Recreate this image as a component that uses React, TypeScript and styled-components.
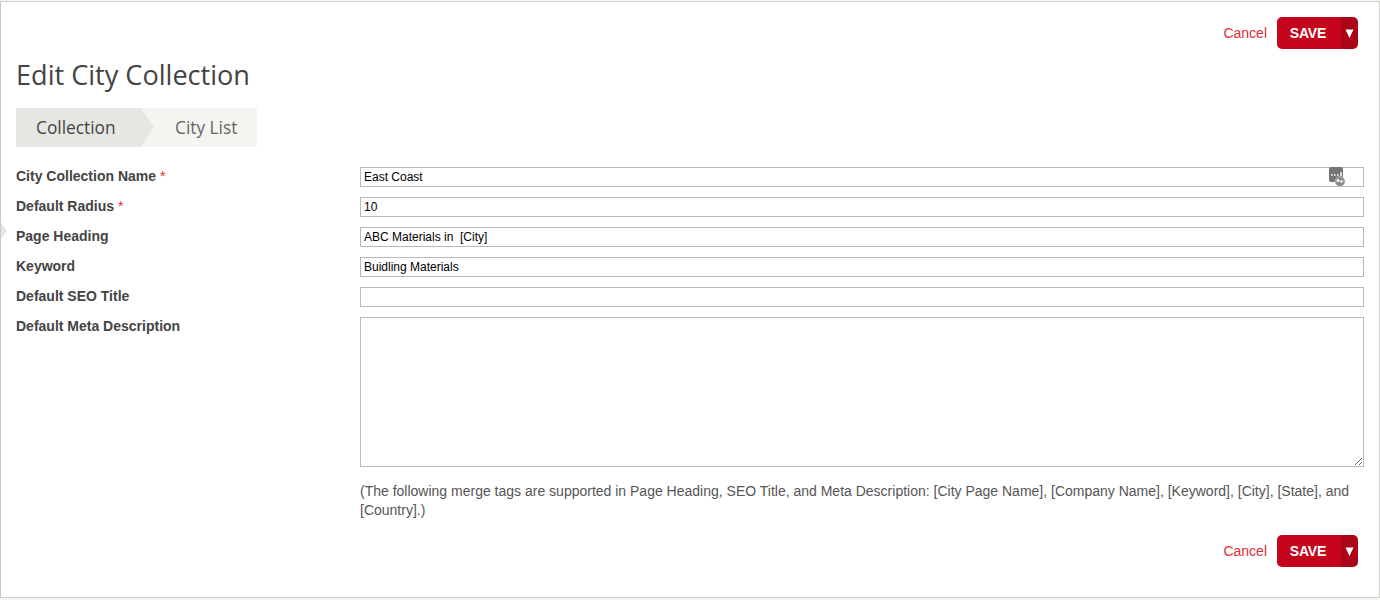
import React from 'react'
import styled, { createGlobalStyle } from 'styled-components'

const GlobalStyle = createGlobalStyle`
  html, body {
    margin: 0;
    padding: 0;
    background: #f6f6f1;
  }
  body {
    font-family: 'Liberation Sans', Arial, sans-serif;
  }
`

const Panel = styled.div`
  position: relative;
  box-sizing: border-box;
  width: 1380px;
  height: 597px;
  margin-top: 1px;
  padding: 15px 16px 0 15px;
  border: 1px solid #cfcfcb;
  border-left-color: #c8c8c8;
  background: #fff;
`

const SideNotch = styled.div`
  position: absolute;
  left: 0;
  top: 221px;
  width: 0;
  height: 0;
  border-top: 8px solid transparent;
  border-bottom: 8px solid transparent;
  border-left: 6px solid #e6e7e3;
`

const ActionBar = styled.div`
  display: flex;
  justify-content: flex-end;
  align-items: center;
  gap: 10px;
  padding-right: 5px;
`

const CancelLink = styled.a`
  font-size: 14px;
  color: #dc2c38;
  text-decoration: none;
`

const SaveGroup = styled.div`
  display: flex;
  height: 32px;
  border-radius: 5px;
  overflow: hidden;
`

const SaveButton = styled.button`
  width: 64px;
  border: 0;
  padding: 0 2px 0 0;
  background: #c4051c;
  color: #fff;
  font-family: 'Liberation Sans', Arial, sans-serif;
  font-size: 14px;
  font-weight: 700;
  letter-spacing: -0.2px;
`

const SaveToggle = styled.button`
  display: flex;
  align-items: center;
  justify-content: center;
  width: 17px;
  border: 0;
  padding: 0;
  background: #aa0416;
`

const Title = styled.h1`
  margin: 7px 0 0;
  font-family: 'Open Sans', sans-serif;
  font-size: 27.1px;
  line-height: 38px;
  font-weight: 400;
  color: #444;
`

const Tabs = styled.div`
  display: flex;
  width: 241px;
  height: 39px;
  margin-top: 14px;
  background: #f4f5f0;
`

const Tab = styled.div<{ $active?: boolean }>`
  position: relative;
  display: flex;
  align-items: center;
  box-sizing: border-box;
  height: 39px;
  font-family: 'Open Sans', sans-serif;
  font-size: 17.3px;
  color: ${({ $active }) => ($active ? '#444' : '#666')};
  width: ${({ $active }) => ($active ? '125px' : '116px')};
  padding-left: ${({ $active }) => ($active ? '20px' : '34px')};
  background: ${({ $active }) => ($active ? '#e6e7e3' : 'transparent')};

  ${({ $active }) =>
    $active &&
    `
    &::after {
      content: '';
      position: absolute;
      left: 100%;
      top: 0;
      border-top: 19.5px solid transparent;
      border-bottom: 19.5px solid transparent;
      border-left: 13px solid #e6e7e3;
    }
  `}
`

const Form = styled.div`
  display: flex;
  flex-direction: column;
  gap: 10px;
  margin-top: 20px;
`

const Row = styled.div`
  display: grid;
  grid-template-columns: 344px 1004px;
`

const Label = styled.label`
  padding-top: 1px;
  font-size: 14px;
  font-weight: 700;
  line-height: 17px;
  color: #444;
`

const Required = styled.span`
  color: #dc2c38;
  font-weight: 400;
`

const FieldWrap = styled.div`
  position: relative;
`

const Input = styled.input`
  display: block;
  box-sizing: border-box;
  width: 100%;
  height: 20px;
  padding: 0 3px;
  border: 1px solid #b9b9b9;
  border-radius: 0;
  outline: 0;
  background: #fff;
  color: #000;
  font-family: 'Liberation Sans', Arial, sans-serif;
  font-size: 12px;
`

const TextArea = styled.textarea`
  display: block;
  box-sizing: border-box;
  width: 100%;
  height: 150px;
  padding: 3px;
  border: 1px solid #b9b9b9;
  border-radius: 0;
  outline: 0;
  background: #fff;
  font-family: 'Liberation Sans', Arial, sans-serif;
  font-size: 12px;
`

const TagIcon = styled.svg`
  position: absolute;
  right: 18px;
  top: 0;
`

const Note = styled.p`
  margin: 15px 0 0;
  font-size: 14px;
  line-height: 19px;
  color: #555;
`

const BottomBar = styled(ActionBar)`
  margin-top: 15px;
`

const Actions = () => (
  <>
    <CancelLink href="#">Cancel</CancelLink>
    <SaveGroup>
      <SaveButton type="button">SAVE</SaveButton>
      <SaveToggle type="button" aria-label="More">
        <svg width="9" height="9" viewBox="0 0 9 9">
          <path d="M0.5 0.5h8L4.5 9z" fill="#fff" />
        </svg>
      </SaveToggle>
    </SaveGroup>
  </>
)

const App = () => (
  <>
    <GlobalStyle />
    <Panel>
      <SideNotch />
      <ActionBar>
        <Actions />
      </ActionBar>
      <Title>Edit City Collection</Title>
      <Tabs>
        <Tab $active>Collection</Tab>
        <Tab>City List</Tab>
      </Tabs>
      <Form>
        <Row>
          <Label>
            City Collection Name <Required>*</Required>
          </Label>
          <FieldWrap>
            <Input defaultValue="East Coast" />
            <TagIcon width="17" height="20" viewBox="0 0 17 20">
              <path d="M2 0h10a2 2 0 0 1 2 2v11a2 2 0 0 1-2 2H2a2 2 0 0 1-2-2V2a2 2 0 0 1 2-2z" fill="#757575" />
              <path d="M2 8h1.6M5 8h1.6M8 8h1.6M12 5v4" stroke="#fff" strokeWidth="1.5" />
              <circle cx="11" cy="14.5" r="5" fill="#8a8a8a" stroke="#d5d5d5" strokeWidth="0.6" />
              <circle cx="9" cy="13.5" r="1.5" fill="#fff" />
              <path d="M10 14h4.5M12.5 14v2" stroke="#fff" strokeWidth="1" />
            </TagIcon>
          </FieldWrap>
        </Row>
        <Row>
          <Label>
            Default Radius <Required>*</Required>
          </Label>
          <Input defaultValue="10" />
        </Row>
        <Row>
          <Label>Page Heading</Label>
          <Input defaultValue="ABC Materials in  [City]" />
        </Row>
        <Row>
          <Label>Keyword</Label>
          <Input defaultValue="Buidling Materials" />
        </Row>
        <Row>
          <Label>Default SEO Title</Label>
          <Input defaultValue="" />
        </Row>
        <Row>
          <Label>Default Meta Description</Label>
          <FieldWrap>
            <TextArea />
            <Note>
              (The following merge tags are supported in Page Heading, SEO Title, and Meta Description: [City Page
              Name], [Company Name], [Keyword], [City], [State], and [Country].)
            </Note>
          </FieldWrap>
        </Row>
      </Form>
      <BottomBar>
        <Actions />
      </BottomBar>
    </Panel>
  </>
)

export default App
